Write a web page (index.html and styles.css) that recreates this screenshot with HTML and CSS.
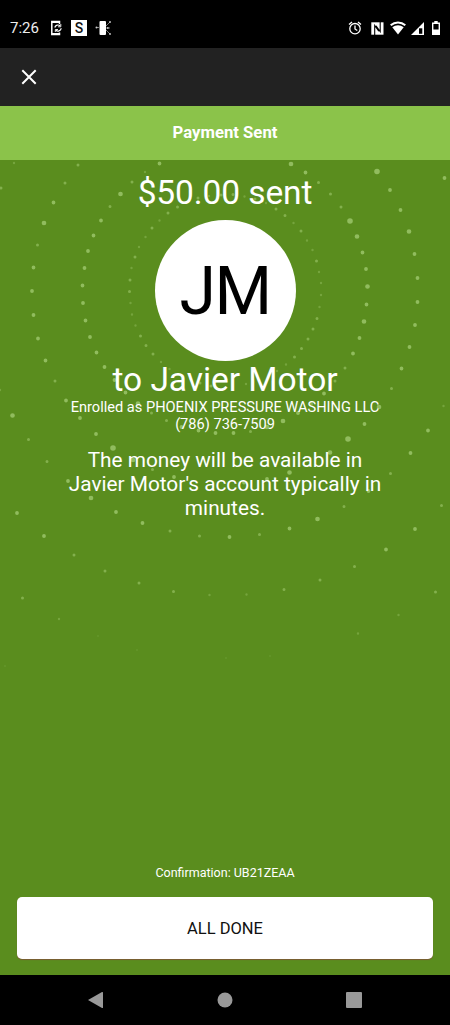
FILE: index.html
```html
<!DOCTYPE html>
<html lang="en">
<head>
  <meta charset="UTF-8">
  <meta name="viewport" content="width=device-width, initial-scale=1.0">
  <title>Payment Sent</title>
  <link rel="stylesheet" href="styles.css">
</head>
<body>
  <div class="screen">
    <div class="status-bar">
      <span class="time">7:26</span>
      <div class="status-left">
        <svg width="13" height="16" viewBox="0 0 13 16" fill="none" stroke="#fff">
          <path d="M9.500 4V1.500H1.800v13h7.700V12.500" stroke-width="1.5"/>
          <path d="M2 2h7.500M2 14h7.500" stroke-width="2"/>
          <path d="M4.800 7.500a3.200 3.200 0 0 1 5.400-1.500M11.200 8.300a3.200 3.200 0 0 1-5.400 1.900" stroke-width="1.200"/>
          <path d="M8 6.800h2.800V4M8 9.500H5.300v2.500" stroke-width=".9"/>
        </svg>
        <span class="s-icon">S</span>
        <svg width="17" height="16" viewBox="0 0 17 16">
          <rect x="4.500" y="1" width="6.500" height="14" rx="1" fill="#fff"/>
          <path d="M1 7.500h4M11 6l4-4M11 8h4M11 10l4 4" stroke="#777" stroke-width="1" fill="none"/>
          <circle cx="1.500" cy="7.500" r="1" fill="#ccc"/>
          <circle cx="15" cy="2" r=".9" fill="#ccc"/>
          <circle cx="12.800" cy="8" r=".9" fill="#ccc"/>
          <circle cx="15" cy="14" r=".9" fill="#ccc"/>
        </svg>
      </div>
      <div class="status-right">
        <svg class="alarm" width="14" height="14" viewBox="0 0 14 14" fill="none" stroke="#fff" stroke-width="1.3">
          <circle cx="7" cy="7.700" r="5.200"/>
          <path d="M7 4.500v3.500l2.300 1.500M1 3.500L4 1M13 3.500L10 1"/>
        </svg>
        <svg class="nfc" width="13" height="13" viewBox="0 0 13 13">
          <rect x=".3" y=".3" width="12.200" height="12.400" fill="#fff"/>
          <path d="M3.700 13V3.500L7.800 9.300M9.200 0v9.500L5 3.700" stroke="#000" stroke-width="1.100" fill="none"/>
        </svg>
        <svg class="wifi" width="16" height="14" viewBox="0 0 16 14">
          <path d="M.7 4.300C5 .4 11 .4 15.300 4.300" stroke="#fff" stroke-width="2" fill="none"/>
          <path d="M2.300 6.300C5.800 3.500 10.200 3.500 13.700 6.300L8 13.500z" fill="#fff"/>
        </svg>
        <svg class="signal" width="13" height="13" viewBox="0 0 13 13">
          <path d="M0 13L13 0v13z" fill="#fff"/>
          <path d="M8 6.300h3.300v5.500H8z" fill="#000"/>
        </svg>
        <svg width="8" height="14" viewBox="0 0 8 14">
          <path d="M2.300 0h3.400v1.500H8V14H0V1.500h2.300z" fill="#fff"/>
          <path d="M1.400 3h5.200v5.500H1.400z" fill="#000"/>
        </svg>
      </div>
    </div>

    <div class="toolbar">
      <button class="close" aria-label="Close">
        <svg width="16" height="16" viewBox="0 0 16 16"><path d="M1.300 1.300l13.400 13.400M14.700 1.300L1.300 14.700" stroke="#fff" stroke-width="2"/></svg>
      </button>
    </div>

    <div class="banner">Payment Sent</div>

    <div class="content">
      <!-- rings of dots, one path per dot size -->
      <svg class="dots" viewBox="0 159 450 816" width="450" height="816">
        <path class="dot faint" d="M14 163h0M145 172h0M159.500 220.500h0M145.500 237h0M139 247h0M131.500 268h0M209 196h0M244.500 196.500h0M266 203h0M293.500 223h0M307 240.500h0M312.500 250h0M319 272h0M321 283h0M321 295h0M319.500 307h0M130.500 303h0M132 314.500h0M135.500 325.500h0M161 362h0M169.500 369h0M190 379h0M246 384h0M286 364.500h0M277 371h0M0 390h0M443.500 406h0M209.500 595h0M246.500 594.500h0M59 619h0M398.500 615h0M358 633.500h0"/>
        <path class="dot faintest" d="M98 636h0M270 656h0M5 666h0M137 650h0M226 658h0"/>
        <path class="dot small" d="M78 165h0M132 182h0M1 188h0M65 183h0M110 206.500h0M37.500 245h0M177.500 207h0M168 213h0M152 228h0M135 257h0M130 280h0M318.500 182.500h0M330.500 194h0M341 207h0M198 198h0M221 195h0M233 194.500h0M255 199h0M276 209h0M285 215.500h0M301 231h0M316.500 261h0M129.500 291.500h0M140.500 336h0M146 345.500h0M153 354h0M55 381h0M152.500 469.500h0M151.500 413h0M166.500 420.500h0M200 383h0M211 386h0M28.500 439.500h0M47 461.500h0M170 531h0M199.500 536h0M259.500 534.500h0M344 506.500h0M390.500 473.500h0M317 318.500h0M313 329h0M308 339h0M301.500 348.500h0M294.500 357h0M345 368h0M335 381h0M311.500 404h0M250.500 431.500h0M391.500 388.500h0M74 555h0M105 571h0M139 583h0M173.500 591.500h0M284 589.500h0M320 580h0M354.500 566.500h0M441.500 505.500h0M22.500 598h0M435.500 592h0"/>
        <path class="dot medium" d="M159.500 163.500h0M53.500 202.500h0M101 220.500h0M93.500 235.500h0M88 251h0M33.500 267.500h0M84.500 268h0M82.500 285.500h0M305.500 172.500h0M362.500 252.500h0M366 269h0M390 190h0M400.500 210h0M414.500 254h0M417.500 278h0M444.500 178h0M32 291h0M33.500 315h0M38 338.500h0M45.500 360.500h0M66 400.500h0M80 418h0M96 434h0M83 303h0M85.500 320.500h0M90 337h0M96.500 352.500h0M104.500 367h0M114.500 380h0M125.500 392.500h0M181.500 427h0M198.500 430.500h0M215.500 433h0M174 477h0M68 481h0M116 512h0M142.500 523h0M229.500 537h0M289.500 528.500h0M368.500 491h0M410.500 453h0M428 430.500h0M366.500 304.500h0M359.500 338h0M353 353.500h0M324 393.500h0M298 413h0M233.500 433h0M417.500 302h0M415 325h0M409.500 347h0M401.500 368.500h0M364.500 424h0M267 479h0M244 482.500h0M17 513h0M44 536h0M386 549.500h0M415 529h0"/>
        <path class="dot large" d="M120.500 194h0M44 223h0M291 164h0M357 236.500h0M367.500 286.500h0M409 231.500h0M91 498h0M138 403.500h0M12.500 415.500h0M133 460h0M283 421h0M267 427h0M379 407h0M330 452.500h0M289.500 472.500h0M317.500 519h0M364 321.500h0"/>
        <path class="dot huge" d="M350 221h0M377 171.500h0M113 448h0M348 439h0"/>
      </svg>

      <h1 class="amount">$50.00 sent</h1>
      <div class="avatar"><span>JM</span></div>
      <h2 class="recipient">to Javier Motor</h2>
      <p class="enrolled">Enrolled as PHOENIX PRESSURE WASHING LLC</p>
      <p class="phone">(786) 736-7509</p>
      <p class="message">The money will be available in<br>Javier Motor's account typically in<br>minutes.</p>

      <div class="bottom">
        <p class="confirmation">Confirmation: UB21ZEAA</p>
        <button class="done">ALL DONE</button>
      </div>
    </div>

    <div class="nav-bar">
      <svg width="15" height="18" viewBox="0 0 15 18"><path d="M0 9L14 1q1-.4 1 .6v14.800q0 1-1 .6z" fill="#999"/></svg>
      <svg width="16" height="16" viewBox="0 0 16 16"><circle cx="8" cy="8" r="7.500" fill="#999"/></svg>
      <svg width="16" height="16" viewBox="0 0 16 16"><rect width="16" height="16" rx="1" fill="#999"/></svg>
    </div>
  </div>
</body>
</html>
```
FILE: styles.css
```css
* {
  box-sizing: border-box;
}
body {
  margin: 0;
  font-family: Roboto, sans-serif;
  color: #fff;
  background: #000;
}
h1, h2, p {
  margin: 0;
  font-weight: 400;
  white-space: nowrap;
}
svg {
  display: block;
}
button {
  font-family: inherit;
  border: none;
  padding: 0;
}
.screen {
  width: 450px;
  height: 1025px;
  display: flex;
  flex-direction: column;
  overflow: hidden;
}
.status-bar {
  height: 48px;
  padding: 8px 10px 0 10px;
  display: flex;
  align-items: center;
  background: #000;
}
.time {
  width: 40px;
  font-size: 15px;
  color: #eee;
}
.status-left {
  display: flex;
  align-items: center;
  gap: 8px;
}
.s-icon {
  width: 16px;
  height: 16px;
  background: #fff;
  color: #111;
  font-size: 14px;
  font-weight: 500;
  line-height: 16px;
  text-align: center;
}
.status-right {
  margin-left: auto;
  display: flex;
  align-items: center;
}
.alarm {
  margin-right: 9px;
}
.nfc {
  margin-right: 6px;
}
.wifi {
  margin-right: 5px;
}
.signal {
  margin-right: 8px;
}
.toolbar {
  height: 58px;
  padding-left: 21px;
  display: flex;
  align-items: center;
  background: #222;
}
.close {
  background: none;
}
.banner {
  height: 54px;
  line-height: 53px;
  text-align: center;
  font-size: 16.7px;
  font-weight: 700;
  background: #8bc34a;
}
.content {
  position: relative;
  height: 815px;
  padding: 14px 17px 16px;
  display: flex;
  flex-direction: column;
  align-items: center;
  background: #5a8d1e;
}
.content > * {
  position: relative;
}
.content .dots {
  position: absolute;
  top: -1px;
  left: 0;
}
.dot {
  fill: none;
  stroke: #b5dc88;
  stroke-linecap: round;
  opacity: .6;
}
.faintest {
  stroke-width: 2;
  opacity: .12;
}
.faint {
  stroke-width: 2.4;
  opacity: .3;
}
.small {
  stroke-width: 3;
  opacity: .45;
}
.medium {
  stroke-width: 3.8;
}
.large {
  stroke-width: 4.7;
}
.huge {
  stroke-width: 5.6;
}
.amount {
  font-size: 33.5px;
  line-height: 38px;
  letter-spacing: -.1px;
}
.avatar {
  width: 141px;
  height: 141px;
  margin-top: 8px;
  padding-top: 2px;
  border-radius: 50%;
  background: #fff;
  color: #000;
  display: flex;
  align-items: center;
  justify-content: center;
  font-size: 66px;
  letter-spacing: -1.5px;
}
.recipient {
  font-size: 33.5px;
  line-height: 38px;
  letter-spacing: -.05px;
}
.enrolled, .phone {
  font-size: 14.6px;
  line-height: 17px;
}
.message {
  margin-top: 15px;
  font-size: 20.8px;
  line-height: 24px;
  text-align: center;
}
.bottom {
  width: 100%;
  margin-top: auto;
  text-align: center;
}
.confirmation {
  font-size: 12.5px;
  line-height: 16px;
  margin-bottom: 16px;
}
.done {
  display: block;
  width: 100%;
  height: 62px;
  border-radius: 5px;
  background: #fff;
  color: #111;
  font-size: 16.5px;
  box-shadow: 0 1px 1px #7c5a32;
}
.nav-bar {
  height: 50px;
  padding: 0 88px;
  display: flex;
  align-items: center;
  justify-content: space-between;
  background: #000;
}
```
